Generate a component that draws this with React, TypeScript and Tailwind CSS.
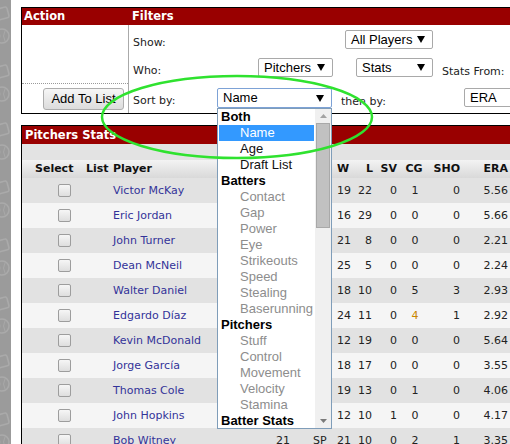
import React from "react";

type StatRow = {
    name: string;
    age: number;
    pos: string;
    w: number;
    l: number;
    sv: number;
    cg: number;
    sho: number;
    era: string;
};

const players: StatRow[] = [
    { name: "Victor McKay", age: 27, pos: "SP", w: 19, l: 22, sv: 0, cg: 1, sho: 0, era: "5.56" },
    { name: "Eric Jordan", age: 25, pos: "SP", w: 16, l: 29, sv: 0, cg: 0, sho: 0, era: "5.66" },
    { name: "John Turner", age: 29, pos: "SP", w: 21, l: 8, sv: 0, cg: 0, sho: 0, era: "2.21" },
    { name: "Dean McNeil", age: 31, pos: "SP", w: 25, l: 5, sv: 0, cg: 0, sho: 0, era: "2.24" },
    { name: "Walter Daniel", age: 26, pos: "SP", w: 18, l: 10, sv: 0, cg: 5, sho: 3, era: "2.93" },
    { name: "Edgardo Díaz", age: 24, pos: "SP", w: 24, l: 11, sv: 0, cg: 4, sho: 1, era: "2.92" },
    { name: "Kevin McDonald", age: 28, pos: "SP", w: 12, l: 19, sv: 0, cg: 0, sho: 0, era: "5.64" },
    { name: "Jorge García", age: 23, pos: "SP", w: 18, l: 17, sv: 0, cg: 0, sho: 0, era: "3.55" },
    { name: "Thomas Cole", age: 30, pos: "SP", w: 19, l: 13, sv: 0, cg: 1, sho: 0, era: "4.06" },
    { name: "John Hopkins", age: 33, pos: "RP", w: 12, l: 10, sv: 1, cg: 0, sho: 0, era: "4.17" },
    { name: "Bob Witney", age: 21, pos: "SP", w: 21, l: 10, sv: 0, cg: 2, sho: 1, era: "3.35" },
];

// group label, then options: [text, state]
const sortGroups: { label: string; items: [string, "sel" | "on" | "off"][] }[] = [
    { label: "Both", items: [["Name", "sel"], ["Age", "on"], ["Draft List", "on"]] },
    {
        label: "Batters",
        items: [
            ["Contact", "off"], ["Gap", "off"], ["Power", "off"], ["Eye", "off"],
            ["Strikeouts", "off"], ["Speed", "off"], ["Stealing", "off"], ["Baserunning", "off"],
        ],
    },
    {
        label: "Pitchers",
        items: [["Stuff", "off"], ["Control", "off"], ["Movement", "off"], ["Velocity", "off"], ["Stamina", "off"]],
    },
    { label: "Batter Stats", items: [] },
];

const Caret = () => (
    <svg width="8" height="7" viewBox="0 0 8 7">
        <polygon points="0,0 8,0 4,7" fill="#000" />
    </svg>
);

const Select: React.FC<{ label: string; className: string }> = ({ label, className }) => (
    <div className={`flex h-[19px] items-center justify-between rounded-[2px] border border-[#a9a9a9] bg-white pl-[5px] pr-[7px] font-['Liberation_Sans',Arial,sans-serif] text-[13px] leading-[17px] text-black ${className}`}>
        <span>{label}</span>
        <Caret />
    </div>
);

const SideStrip = () => (
    <div className="h-full w-[11px] shrink-0 bg-[#9b9b9b]">
        <svg width="11" height="444">
            <defs>
                <pattern id="balls" width="11" height="58" patternUnits="userSpaceOnUse">
                    <rect x="-4" y="8" width="12" height="11" rx="2" fill="none" stroke="#aaaaaa" strokeWidth="1.5" transform="rotate(-15 2 13)" />
                    <circle cx="2" cy="36" r="7" fill="none" stroke="#aaaaaa" strokeWidth="1.5" />
                    <path d="M-2 32 q4 4 0 8 M5 31 q-3 5 0 10" fill="none" stroke="#a8a8a8" strokeWidth="1" />
                </pattern>
            </defs>
            <rect width="11" height="444" fill="url(#balls)" />
        </svg>
    </div>
);

const SortDropdown = () => (
    <div className="absolute left-0 top-[20px] z-20 flex h-[321px] w-[115px] border border-[#7f9db9] bg-white font-['Liberation_Sans',Arial,sans-serif] text-[13px] leading-[16px]">
        <div className="flex-1 px-[1px]">
            {sortGroups.map((g) => (
                <div key={g.label}>
                    <div className="h-[16px] pl-[2px] font-bold text-black">{g.label}</div>
                    {g.items.map(([t, s]) => (
                        <div
                            key={t}
                            className={
                                s === "sel"
                                    ? "h-[16px] bg-[#3399ff] pl-[21px] text-white"
                                    : s === "on"
                                    ? "h-[16px] pl-[21px] text-[#111]"
                                    : "h-[16px] pl-[21px] text-[#8d8d8d]"
                            }
                        >
                            {t}
                        </div>
                    ))}
                </div>
            ))}
        </div>
        <div className="flex w-[16px] flex-col bg-[#f0f0f0]">
            <div className="flex h-[14px] items-center justify-center">
                <svg width="7" height="4" viewBox="0 0 7 4"><polygon points="0,4 7,4 3.5,0" fill="#a3a3a3" /></svg>
            </div>
            <div className="mx-[1px] h-[105px] border border-[#a9a9a9] bg-[#c1c1c1]" />
            <div className="flex-1" />
            <div className="flex h-[14px] items-center justify-center">
                <svg width="7" height="4" viewBox="0 0 7 4"><polygon points="0,0 7,0 3.5,4" fill="#7a7a7a" /></svg>
            </div>
        </div>
    </div>
);

const Checkbox = () => (
    <div className="ml-[36px] h-[13px] w-[13px] rounded-[2px] border border-[#9d9d9d] bg-gradient-to-b from-[#f6f6f6] to-[#dedede]" />
);

const App: React.FC = () => {
    return (
        <div className="relative flex h-[444px] w-[510px] overflow-hidden bg-white font-['DejaVu_Sans',Verdana,sans-serif] text-[11px]">
            <SideStrip />

            <div className="ml-[10px] flex shrink-0 flex-col pt-[7px]">
                {/* filters box */}
                <div className="w-[530px] border border-black">
                    <div className="flex h-[17px] bg-[#990000] text-[11.5px] font-bold leading-[17px] text-white">
                        <div className="w-[107px] pl-[2px]">Action</div>
                        <div className="pl-[3px]">Filters</div>
                    </div>
                    <div className="flex h-[88px]">
                        <div className="flex w-[107px] flex-col border-r border-[#aaaaaa]">
                            <div className="h-[59px] border-b border-dotted border-[#9a9a9a]" />
                            <div className="flex justify-end pr-[4px] pt-[4px]">
                                <button className="h-[22px] w-[81px] rounded-[3px] border border-[#adadad] bg-gradient-to-b from-[#f6f6f6] to-[#dcdcdc] font-['Liberation_Sans',Arial,sans-serif] text-[13px] text-black">
                                    Add To List
                                </button>
                            </div>
                        </div>

                        <div className="flex flex-1 flex-col text-[#222]">
                            <div className="flex h-[28px] items-start">
                                <div className="ml-[4px] mt-[11px] w-[212px] leading-[13px]">Show:</div>
                                <Select label="All Players" className="mt-[5px] w-[88px]" />
                            </div>
                            <div className="flex h-[30px] items-start">
                                <div className="ml-[4px] mt-[11px] w-[125px] leading-[13px]">Who:</div>
                                <Select label="Pitchers" className="mt-[5px] w-[75px]" />
                                <Select label="Stats" className="ml-[23px] mt-[5px] w-[77px]" />
                                <div className="ml-[9px] mt-[12px] leading-[13px]">Stats From:</div>
                            </div>
                            <div className="flex h-[30px] items-start">
                                <div className="ml-[4px] mt-[11px] w-[84px] leading-[13px]">Sort by:</div>
                                <div className="relative mt-[5px] w-[115px]">
                                    <div className="flex h-[20px] items-center justify-between rounded-[2px] border border-[#7da2d6] bg-white pl-[5px] pr-[7px] font-['Liberation_Sans',Arial,sans-serif] text-[13px] text-black">
                                        <span>Name</span>
                                        <Caret />
                                    </div>
                                    <SortDropdown />
                                </div>
                                <div className="ml-[9px] mt-[12px] w-[123px] leading-[13px]">then by:</div>
                                <Select label="ERA" className="mt-[5px] w-[80px]" />
                            </div>
                        </div>
                    </div>
                </div>

                {/* stats table */}
                <div className="mt-[11px] w-[530px] border-l border-t border-black">
                    <div className="h-[18px] bg-[#990000] pl-[3px] text-[11.5px] font-bold leading-[18px] text-white">Pitchers Stats</div>
                    <div className="h-[16px] bg-[#e3e3e3]" />
                    <div className="flex h-[18px] bg-gradient-to-b from-[#f3f3f3] to-[#d9d9d9] text-[11px] font-bold leading-[18px] text-[#111]">
                        <div className="w-[62px] pl-[13px]">Select</div>
                        <div className="w-[26px] pl-[2px]">List</div>
                        <div className="w-[160px] pl-[3px]">Player</div>
                        <div className="w-[30px] pr-[10px] text-right">Age</div>
                        <div className="w-[35px] pl-[10px]">Pos</div>
                        <div className="w-[20px] pl-[2px]">W</div>
                        <div className="w-[20px] pr-[2px] text-right">L</div>
                        <div className="w-[25px] pr-[3px] text-right">SV</div>
                        <div className="w-[28px] text-center">CG</div>
                        <div className="w-[38px] pr-[6px] text-right">SHO</div>
                        <div className="w-[46px] pr-[4px] text-right">ERA</div>
                    </div>
                    {players.map((p, i) => (
                        <div
                            key={p.name}
                            className={`flex h-[25px] items-center leading-[13px] text-[#222] ${i % 2 === 0 ? "bg-[#e2e2e2]" : "bg-[#f5f5f5]"}`}
                        >
                            <div className="w-[62px]">
                                <Checkbox />
                            </div>
                            <div className="w-[26px]" />
                            <div className="w-[160px] pl-[3px] text-[#333399]">{p.name}</div>
                            <div className="w-[30px] pr-[10px] text-right">{p.age}</div>
                            <div className="w-[35px] pl-[13px]">{p.pos}</div>
                            <div className="w-[20px] pl-[2px]">{p.w}</div>
                            <div className="w-[20px] pr-[3px] text-right">{p.l}</div>
                            <div className="w-[25px] pr-[3px] text-right">{p.sv}</div>
                            <div className={`w-[28px] pl-[2px] text-center ${p.cg === 4 ? "text-[#c98500]" : ""}`}>{p.cg}</div>
                            <div className="w-[38px] pr-[6px] text-right">{p.sho}</div>
                            <div className="w-[46px] pr-[4px] text-right">{p.era}</div>
                        </div>
                    ))}
                </div>
            </div>

            {/* highlight ring drawn over the page */}
            <svg className="pointer-events-none absolute left-0 top-0 z-30" width="510" height="444">
                <ellipse cx="237" cy="117" rx="135" ry="41" fill="none" stroke="#2fe22f" strokeWidth="2.5" />
            </svg>
        </div>
    );
};

export default App;
